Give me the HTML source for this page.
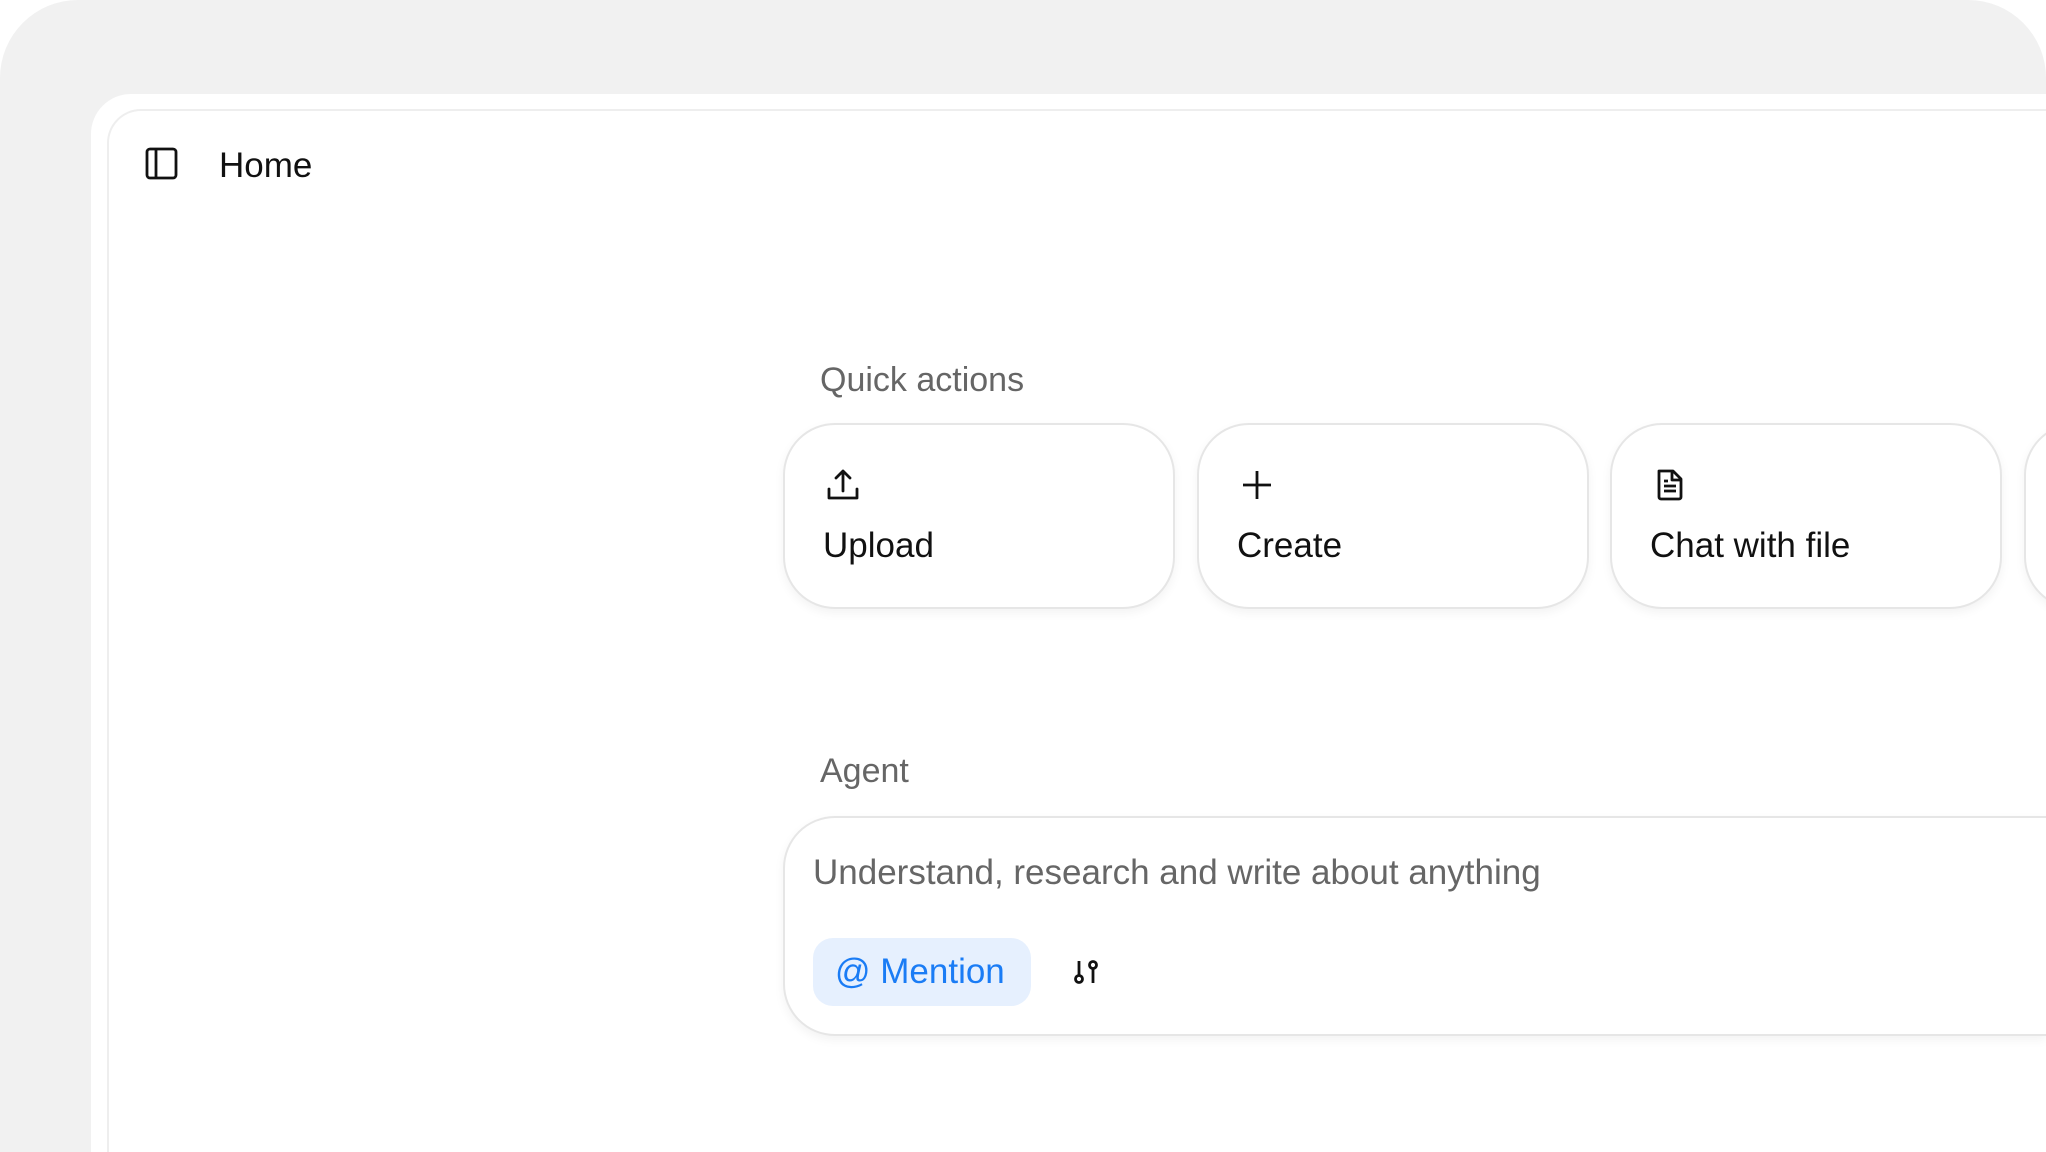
<!DOCTYPE html>
<html><head><meta charset="utf-8"><style>
*{margin:0;padding:0;box-sizing:border-box}
html,body{width:2046px;height:1152px;overflow:hidden;background:#fff;font-family:"Liberation Sans",sans-serif;position:relative}
.bg{position:absolute;left:0;top:0;width:2046px;height:1152px;background:#f1f1f1;border-radius:78px 78px 0 0}
.frame{position:absolute;left:91px;top:94px;width:1955px;height:1058px;background:#fff;border-radius:40px 0 0 0}
.panel{position:absolute;left:107px;top:109px;width:1939px;height:1043px;background:#fff;border:2px solid #eeeeee;border-right:none;border-bottom:none;border-radius:34px 0 0 0}
.abs{position:absolute}
.home{left:219px;top:146px;font-size:35px;color:#111;font-weight:500}
.label{font-size:34px;color:#666}
.card{position:absolute;top:423px;width:392px;height:186px;border:2px solid #e6e6e6;border-radius:52px;background:#fff;box-shadow:0 4px 10px rgba(0,0,0,.05)}
.card svg{position:absolute;left:40px;top:42px}
.card span{position:absolute;left:38px;top:101px;font-size:35px;color:#111;font-weight:500}
.agent{position:absolute;left:783px;top:816px;width:1263px;height:220px;border:2px solid #e6e6e6;border-right:none;border-radius:52px 0 0 52px;background:#fff;box-shadow:0 4px 10px rgba(0,0,0,.05)}
.ph{position:absolute;left:28px;top:35px;font-size:35px;color:#666}
.pill{position:absolute;left:28px;top:120px;width:218px;height:68px;border-radius:20px;background:#e6f0fe;color:#1a7cf5;font-size:35px;line-height:68px;padding-left:22px;font-weight:500}
.wrap{position:absolute;left:0;top:0;width:2046px;height:1152px;overflow:hidden}
</style></head><body>
<div class="wrap">
<div class="bg"></div>
<div class="frame"></div>
<div class="panel"></div>
<svg class="abs" style="left:145px;top:147px" width="33" height="33" viewBox="0 0 33 33" fill="none" stroke="#111" stroke-width="2.8"><rect x="2" y="2" width="29" height="29" rx="3"/><line x1="11" y1="2" x2="11" y2="31"/></svg>
<div class="abs home">Home</div>
<div class="abs label" style="left:820px;top:361px">Quick actions</div>
<div class="card" style="left:783px"><svg width="36" height="36" viewBox="0 0 36 36" fill="none" stroke="#111" stroke-width="2.8" stroke-linecap="round" stroke-linejoin="round"><path d="M18 24V4M11 11l7-7 7 7"/><path d="M4 22v9h28v-9"/></svg><span>Upload</span></div>
<div class="card" style="left:1197px"><svg width="36" height="36" viewBox="0 0 36 36" fill="none" stroke="#111" stroke-width="2.8"><path d="M18 4v28M4 18h28"/></svg><span>Create</span></div>
<div class="card" style="left:1610px"><svg width="36" height="36" viewBox="0 0 36 36" fill="none" stroke="#111" stroke-width="2.8" stroke-linejoin="round"><path d="M7 4h14l8 8v18a2 2 0 0 1-2 2H9a2 2 0 0 1-2-2z"/><path d="M20 4v9h9M12 19h12M12 24h12M12 14h4"/></svg><span>Chat with file</span></div>
<div class="card" style="left:2024px"></div>
<div class="abs label" style="left:820px;top:752px">Agent</div>
<div class="agent">
<div class="ph">Understand, research and write about anything</div>
<div class="pill">@ Mention</div>
<svg style="position:absolute;left:286px;top:139px" width="30" height="30" viewBox="0 0 30 30" fill="none" stroke="#111" stroke-width="2.8"><circle cx="8" cy="22" r="3.5"/><path d="M8 18.5V4"/><circle cx="22" cy="8" r="3.5"/><path d="M22 11.5V26"/></svg>
</div>
</div>
</body></html>
